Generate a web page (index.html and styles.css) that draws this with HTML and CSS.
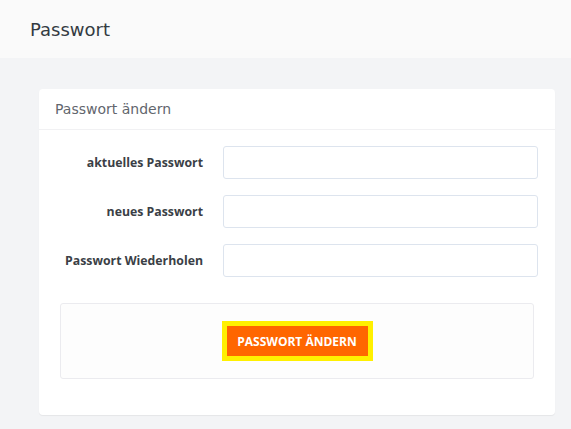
FILE: index.html
```html
<!DOCTYPE html>
<html lang="de">
<head>
<meta charset="utf-8">
<title>Passwort</title>
<link rel="stylesheet" href="styles.css">
</head>
<body>
<header class="page-header">
  <h1 class="page-title">Passwort</h1>
</header>
<main class="content">
  <section class="card">
    <div class="card-header">Passwort ändern</div>
    <form class="card-body">
      <div class="form-row">
        <label class="form-label" for="cur">aktuelles Passwort</label>
        <input class="form-input" id="cur" type="password">
      </div>
      <div class="form-row">
        <label class="form-label" for="new">neues Passwort</label>
        <input class="form-input" id="new" type="password">
      </div>
      <div class="form-row">
        <label class="form-label" for="rep">Passwort Wiederholen</label>
        <input class="form-input" id="rep" type="password">
      </div>
      <div class="actions">
        <button class="btn" type="button">Passwort ändern</button>
      </div>
    </form>
  </section>
</main>
</body>
</html>
```

FILE: styles.css
```css
html, body {
  margin: 0;
  padding: 0;
}
body {
  background: #f3f4f6;
  font-family: "Open Sans", "Liberation Sans", sans-serif;
  width: 571px;
  height: 429px;
  overflow: hidden;
}
.page-header {
  height: 58px;
  background: #fafafa;
  display: flex;
  align-items: center;
  padding-left: 30px;
  box-sizing: border-box;
}
.page-title {
  margin: 0;
  font-family: "DejaVu Sans", sans-serif;
  font-weight: normal;
  font-size: 18px;
  color: #343a42;
  letter-spacing: 0;
}
.content {
  padding: 31px 16px 0 39px;
}
.card {
  width: 516px;
  background: #ffffff;
  border-radius: 4px;
  box-shadow: 0 1px 1px rgba(0, 0, 0, 0.06);
  padding-bottom: 36px;
}
.card-header {
  height: 41px;
  box-sizing: border-box;
  border-bottom: 1px solid #f1f1f3;
  padding-left: 16px;
  display: flex;
  align-items: center;
  font-family: "DejaVu Sans", sans-serif;
  font-size: 14px;
  color: #62666d;
}
.card-body {
  display: flex;
  flex-direction: column;
  gap: 16px;
  padding: 16px 17px 0 16px;
  margin: 0;
}
.form-row {
  display: grid;
  grid-template-columns: 148px 1fr;
  column-gap: 20px;
  align-items: center;
}
.form-label {
  text-align: right;
  font-weight: 700;
  font-size: 12.3px;
  color: #3b3f46;
}
.form-input {
  height: 33px;
  box-sizing: border-box;
  border: 1px solid #dde4ee;
  border-radius: 3px;
  background: #fff;
  margin: 0;
  padding: 0 8px;
}
.actions {
  margin: 10px 4px 0 5px;
  height: 76px;
  box-sizing: border-box;
  border: 1px solid #ebebef;
  border-radius: 3px;
  background: #fdfdfd;
  display: flex;
  align-items: center;
  justify-content: center;
}
.btn {
  width: 151px;
  height: 40px;
  box-sizing: border-box;
  border: 5px solid #fff000;
  background: #ff6600;
  color: #ffffff;
  font-family: "Open Sans", sans-serif;
  font-weight: 700;
  font-size: 12px;
  text-transform: uppercase;
  padding: 0;
  margin: 0;
  cursor: pointer;
}
```
